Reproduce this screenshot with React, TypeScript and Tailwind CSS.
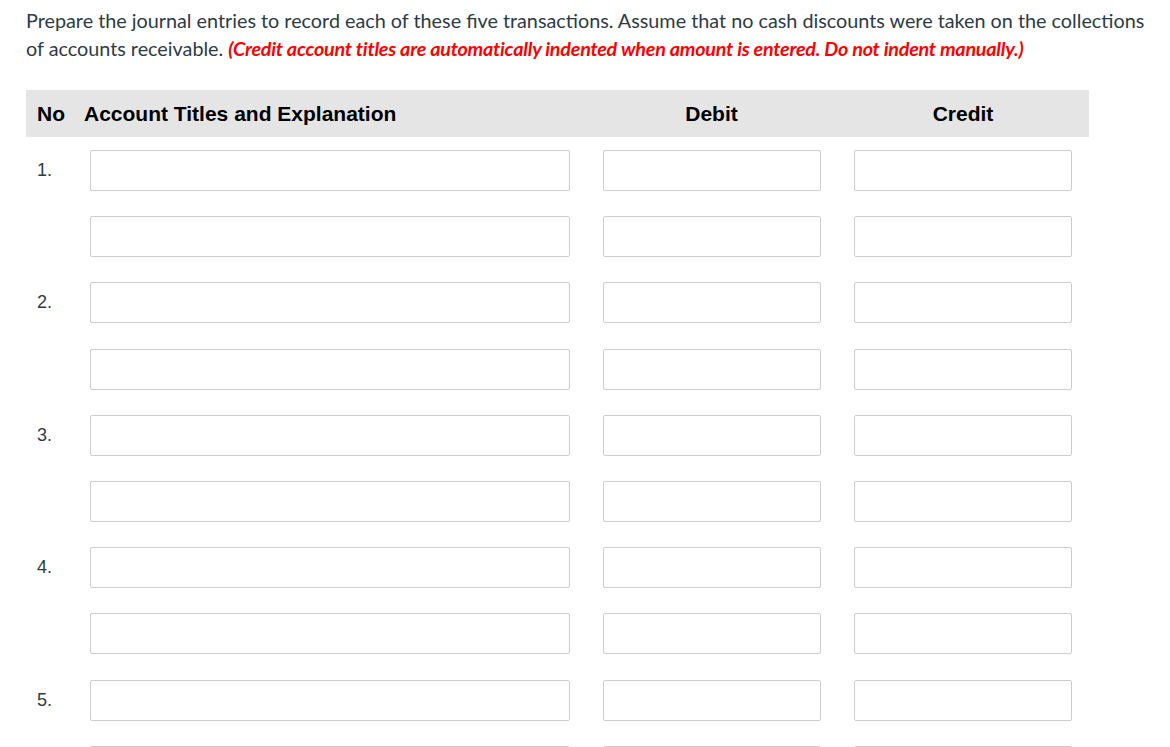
import React from 'react';

const rows = [
  { no: '1.' }, { no: '' },
  { no: '2.' }, { no: '' },
  { no: '3.' }, { no: '' },
  { no: '4.' }, { no: '' },
  { no: '5.' }, { no: '' },
];

function Field({ className }: { className: string }) {
  return (
    <input
      type="text"
      className={`h-[41px] rounded-[2px] border border-[#cccccc] bg-white outline-none ${className}`}
    />
  );
}

export default function App() {
  return (
    <div className="min-h-screen bg-white pl-[26px] pt-[6px]">
      <p
        className="w-[1125px] text-[19.8px] leading-[28px] text-[#2d3b45]"
        style={{ fontFamily: 'Lato, "Liberation Sans", sans-serif' }}
      >
        Prepare the journal entries to record each of these five transactions. Assume that no cash discounts were taken on the collections of accounts receivable.{' '}
        <span className="font-bold italic text-[#ff0000] tracking-[-0.25px]">
          (Credit account titles are automatically indented when amount is entered. Do not indent manually.)
        </span>
      </p>

      <div className="mt-[28px] w-[1063px]" style={{ fontFamily: '"Liberation Sans", Arial, sans-serif' }}>
        <div className="grid h-[47px] grid-cols-[58px_502px_251px_252px] items-center bg-[#e5e5e5] text-[21px] font-bold text-black">
          <div className="pl-[11px]">No</div>
          <div>Account Titles and Explanation</div>
          <div className="text-center">Debit</div>
          <div className="text-center">Credit</div>
        </div>

        <div className="flex flex-col gap-[25.2px] pt-[13px]">
          {rows.map((r, i) => (
            <div key={i} className="grid grid-cols-[58px_502px_251px_252px] items-center">
              <div className="pl-[11px] text-[18px] text-[#2d3b45]">{r.no}</div>
              <div className="pl-[6px]">
                <Field className="w-[480px]" />
              </div>
              <div className="pl-[17px]">
                <Field className="w-[218px]" />
              </div>
              <div className="pl-[17px]">
                <Field className="w-[218px]" />
              </div>
            </div>
          ))}
        </div>
      </div>
    </div>
  );
}
